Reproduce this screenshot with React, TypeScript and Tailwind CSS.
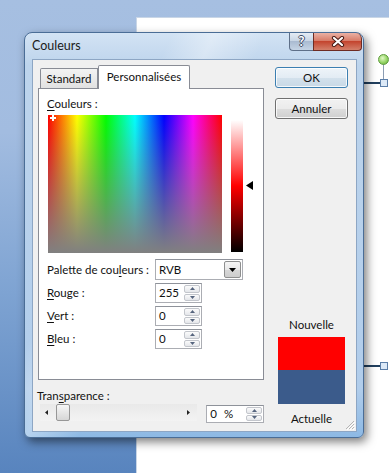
import React from "react";

function SpinBtns() {
  return (
    <div className="flex flex-col w-[17px] h-full py-px pr-px gap-px">
      <div className="flex-1 rounded-[2px] border border-[#c3c6cc] bg-[linear-gradient(to_bottom,#fbfbfb,#e4e6ea)] flex items-center justify-center">
        <svg width="5" height="3" viewBox="0 0 5 3"><polygon points="0,3 2.5,0 5,3" fill="#56657e" /></svg>
      </div>
      <div className="flex-1 rounded-[2px] border border-[#c3c6cc] bg-[linear-gradient(to_bottom,#fbfbfb,#e4e6ea)] flex items-center justify-center">
        <svg width="5" height="3" viewBox="0 0 5 3"><polygon points="0,0 2.5,3 5,0" fill="#56657e" /></svg>
      </div>
    </div>
  );
}

function NumBox({ value }: { value: string }) {
  return (
    <div className="flex h-[20px] w-[47px] border border-[#abadb3] border-t-[#8e929a] bg-white">
      <div className="flex-1 pl-[3px] leading-[18px]">{value}</div>
      <SpinBtns />
    </div>
  );
}

export default function App() {
  return (
    <div className="relative w-[389px] h-[473px] overflow-hidden whitespace-nowrap bg-[linear-gradient(to_bottom,#a6bfe1_0%,#a2bce0_28%,#7ea3d2_62%,#5884be_100%)] font-['Lato',sans-serif] text-[11.5px] leading-[16px] text-[#111]">
      {/* document page */}
      <div className="absolute left-[136px] top-[17px] right-0 bottom-0 bg-white border-l border-t border-[#c9d6e6]" />

      {/* shape connectors on page */}
      <div className="absolute left-[383px] top-[64px] w-px h-[16px] bg-[#8c9db3]" />
      <div className="absolute left-[378px] top-[54px] w-[11px] h-[11px] rounded-full border border-[#5f9c3e] bg-[radial-gradient(circle_at_40%_35%,#e2f8c8,#96d566_55%,#62a83a)]" />
      <div className="absolute left-[364px] top-[82px] w-[17px] h-[2px] bg-[#22405f]" />
      <div className="absolute left-[380px] top-[79px] w-[8px] h-[8px] border border-[#5b7ea8] bg-[#dce9f7]" />
      <div className="absolute left-[364px] top-[365px] w-[17px] h-[2px] bg-[#22405f]" />
      <div className="absolute left-[380px] top-[362px] w-[8px] h-[8px] border border-[#5b7ea8] bg-[#dce9f7]" />

      {/* dialog window */}
      <div className="absolute left-[24px] top-[32px] w-[340px] h-[406px] rounded-t-[8px] rounded-b-[6px] border border-[#4a6d96] bg-[linear-gradient(115deg,transparent_28%,rgba(255,255,255,0.35)_36%,transparent_46%),linear-gradient(to_bottom,#d3e3f4,#bdd4ec_8%,#b1cdeb_88%,#8db9e4)] shadow-[3px_4px_10px_rgba(0,0,0,0.5)] flex flex-col">
        <div className="h-[26px] shrink-0 pl-[7px] flex items-center text-[#1a1a1a] text-[12.5px]">Couleurs</div>

        {/* caption buttons */}
        <div className="absolute top-0 right-[1px] flex h-[18px]">
          <div className="w-[24px] h-full rounded-bl-[4px] border border-t-0 border-r-0 border-[#5e6f88] bg-[linear-gradient(to_bottom,#e4ebf4,#c9d6e5_45%,#aabbd1_50%,#c5d4e5)] flex items-center justify-center">
            <span className="text-white font-bold text-[13px] leading-none [text-shadow:1px_0_0_#3e4d66,-1px_0_0_#3e4d66,0_1px_0_#3e4d66,0_-1px_0_#3e4d66]">?</span>
          </div>
          <div className="w-[49px] h-full rounded-br-[4px] rounded-tr-[6px] border border-t-0 border-[#6e2b22] bg-[linear-gradient(to_bottom,#eab1a4,#d77c69_45%,#c4452f_50%,#d3806b)] flex items-center justify-center">
            <svg width="14" height="11" viewBox="0 0 14 11">
              <path d="M3 2 L11 9 M11 2 L3 9" stroke="#4a1b14" strokeWidth="4.2" strokeLinecap="round" />
              <path d="M3 2 L11 9 M11 2 L3 9" stroke="#ffffff" strokeWidth="2.2" strokeLinecap="round" />
            </svg>
          </div>
        </div>

        {/* client area */}
        <div className="relative ml-[7px] mr-[6px] h-[373px] border border-[#8da6c4] bg-[#f0f0f0] flex">
          {/* left column */}
          <div className="ml-[5px] w-[226px] flex flex-col">
            {/* tabs */}
            <div className="mt-[5px] h-[23px] flex items-end pl-[2px]">
              <div className="w-[58px] h-[20px] border border-b-0 border-[#898c95] rounded-tl-[2px] bg-[linear-gradient(to_bottom,#f3f3f3,#e1e1e1)] flex items-center justify-center pt-px">
                Standard
              </div>
              <div className="relative z-10 -mb-px w-[92px] h-[24px] border border-b-0 border-[#898c95] rounded-t-[2px] bg-white flex items-start justify-center pt-[3px]">
                Personnalisées
              </div>
            </div>
            {/* panel */}
            <div className="h-[292px] border border-[#898c95] bg-white flex flex-col">
              <div className="mt-[7px] ml-[8px]">
                <span className="underline underline-offset-2">C</span>ouleurs :
              </div>
              <div className="mt-[3px] ml-[9px] flex">
                <div className="relative w-[174px] h-[138px] bg-[linear-gradient(to_bottom,rgba(128,128,128,0),rgba(128,128,128,1)),linear-gradient(to_right,#ff0000,#ffff00,#00ff00,#00ffff,#0000ff,#ff00ff,#ff0000)]">
                  <div className="absolute left-[2px] top-[2px] w-[6px] h-[2px] bg-white" />
                  <div className="absolute left-[4px] top-0 w-[2px] h-[6px] bg-white" />
                </div>
                <div className="ml-[9px] mt-[5px] w-[12px] h-[132px] bg-[linear-gradient(to_bottom,#ffffff,#ff0000_50%,#000000)]" />
                <svg className="ml-[3px] mt-[66px]" width="7" height="9" viewBox="0 0 7 9">
                  <polygon points="0,4.5 7,0 7,9" fill="#000" />
                </svg>
              </div>
              {/* palette row */}
              <div className="mt-[6px] flex items-center">
                <div className="w-[116px] pl-[8px]">
                  Palette de cou<span className="underline underline-offset-2">l</span>eurs :
                </div>
                <div className="w-[88px] h-[21px] border border-[#abadb3] border-t-[#8e929a] bg-white flex">
                  <div className="flex-1 pl-[3px] leading-[19px]">RVB</div>
                  <div className="w-[17px] m-px border border-[#8e8f8f] rounded-[2px] bg-[linear-gradient(to_bottom,#f5f5f5,#e8e8e8_50%,#d8d8d8_51%,#cdcdcd)] flex items-center justify-center">
                    <svg width="7" height="4" viewBox="0 0 7 4"><polygon points="0,0 7,0 3.5,4" fill="#000" /></svg>
                  </div>
                </div>
              </div>
              <div className="mt-[3px] flex items-center">
                <div className="w-[116px] pl-[8px]"><span className="underline underline-offset-2">R</span>ouge :</div>
                <NumBox value="255" />
              </div>
              <div className="mt-[3px] flex items-center">
                <div className="w-[116px] pl-[8px]"><span className="underline underline-offset-2">V</span>ert :</div>
                <NumBox value="0" />
              </div>
              <div className="mt-[3px] flex items-center">
                <div className="w-[116px] pl-[8px]"><span className="underline underline-offset-2">B</span>leu :</div>
                <NumBox value="0" />
              </div>
            </div>
            {/* transparency */}
            <div className="mt-[8px] -ml-px">
              Tran<span className="underline underline-offset-2">s</span>parence :
            </div>
            <div className="flex">
              <div className="relative ml-[2px] w-[158px] h-[17px] bg-[linear-gradient(to_bottom,#e9e9e9,#f3f3f3)] flex items-center">
                <svg className="absolute left-[5px] top-[6px]" width="3" height="5" viewBox="0 0 3 5"><polygon points="3,0 3,5 0,2.5" fill="#222" /></svg>
                <div className="absolute left-[16px] top-0 w-[14px] h-[17px] rounded-[2px] border border-[#979797] bg-[linear-gradient(to_bottom,#f7f7f7,#e6e6e6_50%,#d6d6d6)]" />
                <svg className="absolute left-[147px] top-[6px]" width="3" height="5" viewBox="0 0 3 5"><polygon points="0,0 0,5 3,2.5" fill="#222" /></svg>
              </div>
              <div className="ml-[9px] mt-px w-[58px] h-[18px] border border-[#abadb3] border-t-[#8e929a] bg-white flex">
                <div className="flex-1 pl-[3px] leading-[16px] [word-spacing:4px]">0 %</div>
                <SpinBtns />
              </div>
            </div>
          </div>

          {/* right column */}
          <div className="ml-[11px] w-[73px] flex flex-col">
            <div className="mt-[7px] h-[21px] rounded-[3px] border border-[#3c7fb1] bg-[linear-gradient(to_bottom,#eef4f9,#e3ecf4_50%,#d3e1ec_51%,#c9d9e6)] shadow-[inset_0_0_0_1px_rgba(255,255,255,0.8)] flex items-center justify-center">
              OK
            </div>
            <div className="mt-[10px] h-[21px] rounded-[3px] border border-[#707070] bg-[linear-gradient(to_bottom,#f2f2f2,#ebebeb_50%,#dddddd_51%,#cfcfcf)] shadow-[inset_0_0_0_1px_rgba(255,255,255,0.8)] flex items-center justify-center">
              Annuler
            </div>
            <div className="mt-[198px] text-center">Nouvelle</div>
            <div className="mt-[4px] ml-[3px] w-[67px] h-[67px] flex flex-col">
              <div className="h-[33px] bg-[#ff0000]" />
              <div className="flex-1 bg-[#3b5b8b]" />
            </div>
            <div className="mt-[7px] text-center">Actuelle</div>
          </div>

          {/* size grip */}
          <svg className="absolute right-[1px] bottom-[1px]" width="11" height="11" viewBox="0 0 11 11">
            <path d="M10 2 L2 10 M10 5 L5 10 M10 8 L8 10" stroke="#b5b5b5" strokeWidth="1" />
            <path d="M11 3 L3 11 M11 6 L6 11 M11 9 L9 11" stroke="#ffffff" strokeWidth="1" />
          </svg>
        </div>
      </div>
    </div>
  );
}
